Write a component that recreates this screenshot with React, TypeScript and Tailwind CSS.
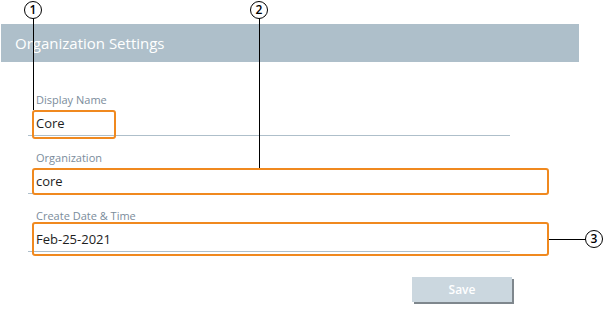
import React from "react";

const fields = [
  { label: "Display Name", value: "Core" },
  { label: "Organization", value: "core" },
  { label: "Create Date & Time", value: "Feb-25-2021" },
];

function Callout({ n, className }: { n: string; className: string }) {
  return (
    <div
      className={`absolute w-[18px] h-[18px] rounded-full border-[1.5px] border-black bg-white flex items-center justify-center text-[12px] font-semibold leading-none text-black ${className}`}
    >
      {n}
    </div>
  );
}

export default function App() {
  return (
    <div
      className="relative w-[604px] h-[332px] bg-white overflow-hidden"
      style={{ fontFamily: '"Open Sans", "Noto Sans", sans-serif' }}
    >
      {/* Header */}
      <div className="mt-[24px] ml-px w-[578px] h-[38px] bg-[#aebfca] flex items-center pl-[14px]">
        <h1 className="text-[15px] text-white">Organization Settings</h1>
      </div>

      {/* Form */}
      <div className="pl-[28px] pt-[30px] flex flex-col gap-[14px]">
        {fields.map((f) => (
          <div key={f.label} className="w-[482px]">
            <div className="pl-[8px] text-[11px] leading-[16px] text-[#7b8c9b]">
              {f.label}
            </div>
            <div className="mt-[6px] pl-[8px] h-[22px] border-b border-[#aebfca] text-[13px] leading-[18px] text-[#1e1e1e]">
              {f.value}
            </div>
          </div>
        ))}
      </div>

      <div className="flex justify-start pl-[412px] mt-[25px]">
        <button className="w-[100px] h-[25px] bg-[#cbd7df] text-white text-[12px] font-semibold shadow-[2px_2px_0_#7f878d]">
          Save
        </button>
      </div>

      {/* Annotation overlays */}
      <div className="absolute left-[32px] top-[110px] w-[84px] h-[29px] border-2 border-[#f0891f] rounded-[3px]" />
      <div className="absolute left-[32px] top-[168px] w-[517px] h-[27px] border-2 border-[#f0891f] rounded-[3px]" />
      <div className="absolute left-[32px] top-[222px] w-[517px] h-[34px] border-2 border-[#f0891f] rounded-[3px]" />

      <div className="absolute left-[33px] top-[18px] w-px h-[92px] bg-black" />
      <div className="absolute left-[259px] top-[18px] w-px h-[150px] bg-black" />
      <div className="absolute left-[549px] top-[239px] w-[37px] h-px bg-black" />

      <Callout n="1" className="left-[24px] top-[1px]" />
      <Callout n="2" className="left-[250px] top-[1px]" />
      <Callout n="3" className="left-[585px] top-[230px]" />
    </div>
  );
}
